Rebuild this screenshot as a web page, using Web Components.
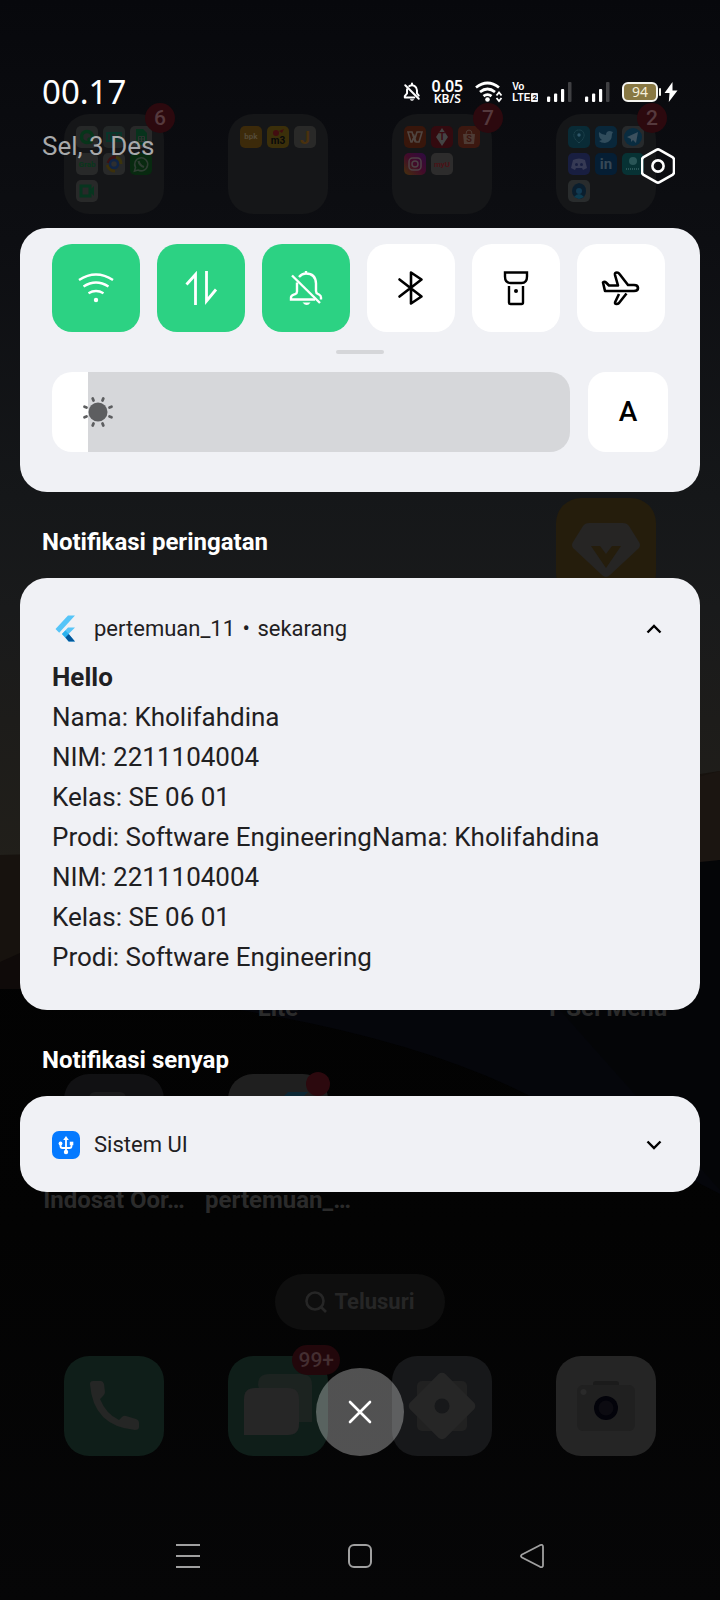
<!DOCTYPE html>
<html lang="id">
<head>
<meta charset="utf-8">
<meta name="viewport" content="width=device-width, initial-scale=1">
<title>Panel notifikasi</title>
<style>
  html, body { margin: 0; background: #050506; }
  body { font-family: Roboto, "Noto Sans", sans-serif; color: #fff; }
</style>
</head>
<body>
<phone-screen>
  <home-screen slot="home"></home-screen>
  <notification-shade slot="shade">
    <status-header></status-header>
    <quick-panel></quick-panel>
    <notice-section heading="Notifikasi peringatan">
      <notice-card app="pertemuan_11" time="sekarang" icon="flutter" open>
        <strong>Hello</strong>
        <span>Nama: Kholifahdina</span>
        <span>NIM: 2211104004</span>
        <span>Kelas: SE 06 01</span>
        <span>Prodi: Software EngineeringNama: Kholifahdina</span>
        <span>NIM: 2211104004</span>
        <span>Kelas: SE 06 01</span>
        <span>Prodi: Software Engineering</span>
      </notice-card>
    </notice-section>
    <notice-section heading="Notifikasi senyap">
      <notice-card app="Sistem UI" icon="usb"></notice-card>
    </notice-section>
    <clear-button></clear-button>
    <nav-bar></nav-bar>
  </notification-shade>
</phone-screen>

<script>
const define = (name, render, after) => customElements.define(name, class extends HTMLElement {
  connectedCallback() {
    if (this.shadowRoot) return;
    const root = this.attachShadow({ mode: 'open' });
    const t = document.createElement('template');
    t.innerHTML = '<style>*{box-sizing:border-box} button{font:inherit;color:inherit;border:0;padding:0;background:none;cursor:pointer} svg{display:block}</style>' + render(this);
    root.append(t.content.cloneNode(true));
    if (after) after(root, this);
  }
});

/* Icon drawings: [width, height, viewBox, markup] */
const ICONS = {
  belloff: [18, 22, '0 0 20 22', '<g fill="none" stroke="currentColor" stroke-width="2.200" stroke-linejoin="round" stroke-linecap="round"><path d="M2.500 3.500 17.500 18.500"/><path d="M4.500 8v4.500L2 15.500v1.500h10.500M7 4.500Q10 2.700 13 4.500q2.500 1.600 2.500 4.500v3.500l2 2.500M10 1.500v1.500"/></g><path d="M7.500 19h5q-2.500 3.500-5 0z" fill="currentColor"/>'],
  wifistat: [28, 22, '0 0 28 22', '<g fill="none" stroke="currentColor" stroke-width="2.800"><path d="M1 6.500Q12.500-2.500 24 6.500M5 11Q12.500 5 20 11M8.500 15.200Q12.500 12 16.500 15.200"/></g><circle cx="12.500" cy="18.500" r="2.300" fill="currentColor"/><path d="M21.500 14.500 24 11.500l2.500 3M21.500 17l2.500 3 2.500-3" fill="none" stroke="currentColor" stroke-width="1.800"/>'],
  signal: [28, 20, '0 0 28 20', '<g fill="currentColor"><rect x="1" y="14.500" width="3.200" height="5.500" rx="1"/><rect x="8" y="11.500" width="3.200" height="8.500" rx="1"/><rect x="15" y="7" width="3.200" height="13" rx="1"/><rect x="22" width="3.500" height="20" rx="1" opacity=".22"/></g>'],
  bolt: [14, 20, '0 0 14 20', '<path d="M8.500 0 .500 11h5L4.800 20 13.500 8.500h-5z" fill="currentColor"/>'],
  hex: [34, 36, '1 0 34 36', '<g fill="none" stroke="currentColor"><path stroke-width="2.600" stroke-linejoin="round" d="M16.400 1.800q1.600-.900 3.200 0l12.800 7.300q1.600 1 1.600 2.900v12q0 1.900-1.600 2.900l-12.800 7.300q-1.600.900-3.200 0L3.600 26.900Q2 25.900 2 24V12q0-1.900 1.600-2.900z"/><circle cx="18" cy="18" r="5.600" stroke-width="2.600"/></g>'],
  wifi: [40, 40, '0 0 40 40', '<g fill="none" stroke="currentColor" stroke-width="2.400"><path d="M3 12Q20 1 37 12M7.500 18.500Q20 10.500 32.500 18.500M12.500 25.200Q20 20.800 27.500 25.200"/></g><circle cx="20" cy="32" r="2.200" fill="currentColor"/>'],
  data: [40, 40, '0 0 40 40', '<path d="M5.500 16.500 14.500 6.500V37M25.500 3v30L35 21.500" fill="none" stroke="currentColor" stroke-width="2.800"/>'],
  bell: [40, 40, '0 0 40 40', '<g fill="none" stroke="currentColor" stroke-width="2.400"><path d="M6 7.500 34 35"/><path d="M11 14.500v9q0 2-1.800 2.600l-1.500.500q-2.700 1-2.700 3V31.500h24M13 9Q16 5.500 20 5.500q9.500 0 10 10v7.500q0 2.200 2 3l1 .500q2 1 2 3v2M20 3v3"/></g><path d="M16.500 34.500h8q-3.500 5-8 0z" fill="currentColor"/>'],
  bluetooth: [40, 40, '0 0 40 40', '<path d="M8.500 11.500 30.500 28.500 20 35.500V4.500L30.500 11.500 8.500 28.500" fill="none" stroke="currentColor" stroke-width="2.600" stroke-linejoin="round" stroke-linecap="round"/>'],
  torch: [40, 40, '0 0 40 40', '<g fill="none" stroke="currentColor" stroke-width="2.400"><path d="M9 4.500h22v4q0 6.500-5.500 6.500h-11Q9 15 9 8.500z"/><path d="M13 18v16.500q0 1.500 1.500 1.500h11q1.500 0 1.500-1.500V18"/></g><circle cx="20" cy="23" r="2" fill="currentColor"/>'],
  plane: [40, 40, '0 0 40 40', '<g fill="none" stroke="currentColor" stroke-width="2.600" stroke-linejoin="round"><path d="M4 23 2 14.500q1.500-1.500 3 0L8 17.500h9L14 7q-.500-2.500 2-2.500 1.500 0 2.500 1.500L27 17h6q4 0 4 3t-4 3z"/><path d="m18 26-3.800 8q-.700 2 1.300 2 1.500 0 2.500-1l7.500-9.500"/></g>'],
  sun: [32, 32, '0 0 32 32', '<circle cx="16" cy="16" r="9.500" fill="currentColor"/><path d="m10.700 2.500.800 2M21.300 2.500l-.800 2M29.500 10.700l-2 .800M29.500 21.300l-2-.800M21.300 29.500l-.800-2M10.700 29.500l.800-2M2.500 21.300l2-.800M2.500 10.700l2 .800" stroke="currentColor" stroke-width="2.800" stroke-linecap="round"/>'],
  flutter: [28, 28, '1 0 28 28', '<path d="M17 .500h7L8.200 17.800 4.500 14zM24 12.500h-7L11 19l6.500 7.500H24L17.500 19z" fill="#56c5f8"/><path d="m11 19 3.400-3.500 3.400 3.500-3.400 3.600z" fill="#29b1ee"/><path d="m14.400 22.600 3.300 3.900H24L17.800 19z" fill="#01579b"/>'],
  usb: [28, 28, '0 0 28 28', '<rect width="28" height="28" rx="7" fill="#057aff"/><path d="M14 7v14M8.500 12v3q0 2 2 2h7q2 0 2-2v-3" fill="none" stroke="#fff" stroke-width="1.800"/><path d="M14 5l2.800 4h-5.600z" fill="#fff"/><circle cx="14" cy="21" r="2.200" fill="#fff"/><circle cx="8.500" cy="12.500" r="1.900" fill="#fff"/><rect x="17.800" y="10.700" width="3.500" height="3.500" fill="#fff"/>'],
  up: [16, 16, '0 0 16 16', '<path d="m1.500 11.500 6.500-6.500 6.500 6.500" fill="none" stroke="currentColor" stroke-width="2.400"/>'],
  down: [16, 16, '0 0 16 16', '<path d="m1.500 4.500 6.500 6.500 6.500-6.500" fill="none" stroke="currentColor" stroke-width="2.400"/>'],
  close: [24, 24, '0 0 24 24', '<path d="m2 2 20 20M22 2 2 22" stroke="currentColor" stroke-width="2.600" stroke-linecap="round"/>'],
  menu: [24, 24, '0 0 24 24', '<path d="M0 1h24M0 12h24M0 23h24" stroke="currentColor" stroke-width="2"/>'],
  home: [24, 24, '0 0 24 24', '<rect x="1" y="1" width="22" height="22" rx="5" fill="none" stroke="currentColor" stroke-width="2"/>'],
  back: [24, 24, '0 0 24 24', '<path d="M1.600 10.800 20 1.200q3-1.200 3 1.500v18.600q0 2.700-3 1.500L1.600 13.200q-1.200-1.200 0-2.400z" fill="none" stroke="currentColor" stroke-width="1.800"/>'],
  search: [22, 22, '0 0 22 22', '<g fill="none" stroke="currentColor" stroke-width="2.600"><circle cx="10" cy="10" r="8.500"/><path d="m16 16 5 5"/></g>'],
};
define('ui-icon', el => {
  const [w, h, vb, art] = ICONS[el.getAttribute('name')];
  return `<style>:host{display:block;flex:none}</style><svg aria-hidden="true" width="${w}" height="${h}" viewBox="${vb}">${art}</svg>`;
});

define('phone-screen', () => `
<style>
  :host{display:grid;min-height:100vh;background:linear-gradient(#07080c 0,#0a0b0f 7%,#0d0e12 15%,#151719 31%,#191a1b 38%,#1d1c1a 45%,#211f1a 54%,#211f1a 60%,#020202 60%,#030303 78%,#060607);position:relative;isolation:isolate}
  .land{position:absolute;inset:0;width:100%;height:100%;z-index:-1}
  ::slotted(*){grid-area:1/1;min-width:0}
</style>
<svg class="land" viewBox="0 0 720 1600" preserveAspectRatio="none" aria-hidden="true">
  <defs><linearGradient id="floor" x1="0" y1="0" x2="0" y2="1"><stop stop-color="#020202"/><stop offset=".5" stop-color="#030303"/><stop offset="1" stop-color="#060607"/></linearGradient></defs>
  <path d="M0 855 200 850 720 771V1010H0z" fill="#17120e"/>
  <path d="M720 771 500 830V960H720z" fill="#1b1511"/>
  <path d="M0 962 60 935V1010H0z" fill="#0f0a09"/>
  <path d="M0 989H250L720 860V1600H0z" fill="url(#floor)"/>
  <path d="M240 1010Q420 1040 530 1096L720 1194V1010z" fill="#05060b"/>
  <path d="M700 862 720 860V1190L560 1010z" fill="#040507"/>
</svg>
<slot name="home"></slot><slot name="shade"></slot>`);

/* ---- Home screen under the shade ---- */
const word = (s, size, fill, y = 15) => `<text x="11" y="${y}" text-anchor="middle" font-family="Roboto, sans-serif" font-weight="700" font-size="${size}" fill="${fill}">${s}</text>`;
const FOLDERS = [
  { badge: 6, apps: [
    ['#262828', '<circle cx="11" cy="11" r="5.500" fill="none" stroke="#07351a" stroke-width="3.500"/><path d="m12 12 4 5" stroke="#07351a" stroke-width="3"/>'],
    ['#222626', '<path d="M4 7h14v8H4zM8 7v8M14 7v8" fill="none" stroke="#08352a" stroke-width="2"/>'],
    ['#282929', '<path d="M6 3h7l4 4v12H6z" fill="#07331c"/><path d="M8.500 10.500h6v5h-6zM11.500 10v6M8 13h7" stroke="#303231" fill="none"/>'],
    ['#282929', word('Grab', 8, '#07371b', 14)],
    ['#282929', '<path d="M5 10Q7 4 13 4" stroke="#3c1213" stroke-width="3" fill="none"/><path d="M13 4q5 2 5 7" stroke="#3c340b" stroke-width="3" fill="none"/><path d="M4 12q3 6 8 6" stroke="#3c300a" stroke-width="3" fill="none"/><circle cx="11" cy="11" r="4" fill="#2e2f30" stroke="#102445" stroke-width="2.500"/>'],
    ['#082a10', '<path d="m4.500 18 1-3.500a6.500 6.500 0 1 1 2.500 2.500z" fill="none" stroke="#2f3d33" stroke-width="1.600"/><path d="M8.500 8q1 4.500 5.500 6" stroke="#2f3d33" stroke-width="2.200" fill="none"/>'],
    ['#282929', '<path d="M5 6h9v10H5z" fill="none" stroke="#07351f" stroke-width="3"/><path d="m14 10 4-4v10l-4-4z" fill="#07351f"/>'],
  ]},
  { apps: [
    ['#3c2a0a', word('bpk', 8, '#544a38', 13)],
    ['#3b2f0a', word('m3', 10, '#08090a', 18) + '<circle cx="9" cy="7" r="3" fill="#420d10"/><path d="m12 5 5-2-2 4z" fill="#420d10"/>'],
    ['#292928', word('J', 18, '#49310e', 18)],
  ]},
  { badge: 7, apps: [
    ['#38160b', '<path d="M4 6h4l2.500 8L13 6h5l-3 10h-3l-2-6-2 6H7z" fill="none" stroke="#504540" stroke-width="1.600"/>'],
    ['#330a0f', '<path d="M11 2 17 11 11 20 5 11z" fill="#444"/>' + word('T', 10, '#3a0a10', 14)],
    ['#3c1810', '<path d="M5 8h12l-1 10H6z" fill="#4e3b34"/><path d="M8 8q0-4 3-4t3 4" fill="none" stroke="#4e3b34"/>' + word('S', 9, '#3b1610', 16)],
    ['url(#ig)', '<g fill="none" stroke="#4d4145" stroke-width="1.500"><rect x="5" y="5" width="12" height="12" rx="3.500"/><circle cx="11" cy="11" r="3"/></g>'],
    ['#2d2c2c', word('myU', 8, '#4b1216', 14)],
  ]},
  { badge: 2, apps: [
    ['#092b36', '<path d="M11 17Q5 12 6 8t5-4 5 4-5 9z" fill="none" stroke="#2a505a" stroke-dasharray="1 1"/><circle cx="11" cy="9" r="1.700" fill="#31586a"/>'],
    ['#09273a', '<path d="M4 6q3 3 7 3 0-4 4-4l3 1-1 2q0 8-7 9-4 0-6-2l3-1q-4-3-3-8z" fill="#304c5c"/>'],
    ['#272a2c', '<circle cx="11" cy="11" r="9" fill="#092c40"/><path d="m5 11 11-5-2 11-3-3-2 2v-3z" fill="#3c505e"/>'],
    ['#181e40', '<path d="M5 7q6-3 12 0l2 8-4 2-1-2H8l-1 2-4-2z" fill="#363a54"/><circle cx="8.500" cy="11.500" r="1.500" fill="#181e40"/><circle cx="13.500" cy="11.500" r="1.500" fill="#181e40"/>'],
    ['#051e34', word('in', 15, '#364856', 16)],
    ['#073234', '<circle cx="11" cy="8" r="4" fill="#295557"/><path d="M4 16h14" stroke="#295557" stroke-width="2" stroke-dasharray="1 1"/>'],
    ['#292c2d', '<path d="M11 3q7 1 7 8t-7 8q-7-2-7-8t7-8z" fill="#0a1e2e"/><circle cx="11" cy="11" r="3" fill="#123a52"/><path d="M6 17q5-6 10 0l-5 2z" fill="#0d3c50"/>'],
  ]},
];
define('count-badge', () => `
<style>:host{display:grid;place-items:center;position:absolute;top:-11px;right:-11px;min-width:30px;height:30px;padding:0 6px;border-radius:15px;background:#2c090e;color:#55393d;font:500 21px/30px Roboto,sans-serif;z-index:1}
:host([dot]){top:-2px;right:-2px;min-width:24px;height:24px}
:host([dock]){right:-12px;color:#442e31;background:#22070b}</style><slot></slot>`);

define('app-folder', el => {
  const f = FOLDERS[+el.getAttribute('index')];
  return `<style>
  :host{display:grid;position:relative;width:100px;height:100px;padding:12px;border-radius:25px;background:#151618;grid-template-columns:repeat(3,22px);grid-auto-rows:22px;gap:5px}
  </style>
  ${f.apps.map(([bg, art]) => `<svg width="22" height="22" viewBox="0 0 22 22" aria-hidden="true">${bg[0] === 'u' ? '<defs><linearGradient id="ig" x1="1" y1="0" x2="0" y2="1"><stop stop-color="#2e0b41"/><stop offset=".5" stop-color="#420b29"/><stop offset="1" stop-color="#45310c"/></linearGradient></defs>' : ''}<rect width="22" height="22" rx="5" fill="${bg}"/>${art}</svg>`).join('')}
  ${f.badge ? `<count-badge>${f.badge}</count-badge>` : ''}`;
});

const APPS = {
  gem: ['#251d0c', '<path d="M33 25h34q4 0 6 3l10 16q2 3 0 6L54 77q-4 4-8 0L17 50q-2-3 0-6l10-16q2-3 6-3z" fill="#262524"/><path d="M35 48h9l6 8 6-8h9L50 70z" fill="#251d0c"/>'],
  simtool: ['#111113', '<rect x="25" y="18" width="37" height="60" rx="6" fill="#1b1b1c"/>'],
  flutterapp: ['#1f1f1f', '<path d="M60 18h20L40 58 30 48z" fill="#0c2734"/>'],
  phone: ['#0f1e19', '<path d="M26 28q0-3 3-3h8q2 0 3 3l1 8q0 2-2 4l-3 3q6 15 19 21l3-3q2-2 4-1l10 3q3 1 3 4v4q0 3-4 3Q29 70 26 28z" fill="#252625"/>'],
  message: ['#0f1e19', '<path d="M30 29q0-11 11-11h32q11 0 11 11v37H40z" fill="#1c2320"/><path d="M16 79V43q0-11 11-11h33q11 0 11 11v25q0 11-11 11z" fill="#262626"/>'],
  settings: ['#17181a', '<rect x="25" y="25" width="50" height="50" rx="5" fill="#212121"/><rect x="25" y="25" width="50" height="50" rx="5" fill="#262626" transform="rotate(45 50 50)"/><circle cx="50" cy="50" r="7.500" fill="#17181a"/>'],
  camera: ['#252525', '<rect x="37" y="25" width="26" height="8" rx="3" fill="#1b1b1b"/><rect x="21" y="29" width="58" height="46" rx="6" fill="#202020"/><circle cx="27.500" cy="36" r="3" fill="#2a2a2a"/><circle cx="50" cy="52" r="12" fill="#03030a"/><circle cx="50" cy="52" r="7.500" fill="#0c0b11"/>'],
};
define('app-icon', el => {
  const [bg, art] = APPS[el.getAttribute('name')];
  return `<style>:host{display:block;position:relative;width:100px;height:100px;border-radius:25px;background:${bg}}</style>
  <svg width="100" height="100" viewBox="0 0 100 100" aria-hidden="true">${art}</svg><slot></slot>`;
});

define('home-screen', () => `
<style>
  :host{display:flex;flex-direction:column;align-items:center;padding:114px 32px 0;color:#2b2b2b}
  .grid,.dock{display:grid;grid-template-columns:repeat(4,1fr);justify-items:center;width:100%}
  .grid{grid-template-rows:repeat(6,192px)}
  .cell{display:flex;flex-direction:column;align-items:center;gap:12px;font:700 24px/28px Roboto,sans-serif;white-space:nowrap}
  .low{grid-row:5;padding-top:112px}
  .search{display:flex;align-items:center;gap:7px;height:56px;padding:0 30px;border-radius:28px;background:#0e0e0e;color:#262626;font:700 22px/28px Roboto,sans-serif;margin:8px 0 26px}
</style>
<div class="grid">
  <app-folder index="0"></app-folder><app-folder index="1"></app-folder><app-folder index="2"></app-folder><app-folder index="3"></app-folder>
  <div class="cell" style="grid-area:3/4"><app-icon name="gem"></app-icon></div>
  <div class="cell low" style="grid-column:2">Lite</div>
  <div class="cell low" style="grid-column:4">T-Sel Menu</div>
  <div class="cell" style="grid-area:6/1"><app-icon name="simtool"></app-icon>Indosat Oor…</div>
  <div class="cell" style="grid-area:6/2"><app-icon name="flutterapp"><count-badge dot></count-badge></app-icon>pertemuan_…</div>
</div>
<button class="search" type="button"><ui-icon name="search"></ui-icon>Telusuri</button>
<div class="dock">
  <app-icon name="phone"></app-icon><app-icon name="message"><count-badge dock>99+</count-badge></app-icon>
  <app-icon name="settings"></app-icon><app-icon name="camera"></app-icon>
</div>`);

/* ---- Shade ---- */
define('notification-shade', () => `
<style>:host{display:flex;flex-direction:column;position:relative;z-index:2;padding:68px 20px 0;min-height:100vh;box-sizing:border-box}</style><slot></slot>`);

define('status-header', () => `
<style>
  :host{display:block;padding:0 22px 44px}
  .row{display:flex;align-items:center}
  .clock{font:400 33px/48px "Noto Sans",sans-serif;margin-right:auto}
  .rate{display:flex;flex-direction:column;align-items:center;margin:0 12px 0 10px;font:600 12px/12px "Noto Sans",sans-serif}
  .rate b{font-weight:600;font-size:16px;line-height:13px}
  .volte{display:flex;flex-direction:column;font:700 10px/11px "Liberation Sans",sans-serif;margin:0 8px 0 9px}
  .volte div{display:flex;align-items:center;gap:1px}
  .volte i{font:700 8px/9px Roboto,sans-serif;color:#0a0b0f;background:#f2f3f5;border-radius:1px;padding:0 1px}
  .sigs{display:flex;gap:10px;margin-right:10px}
  .bat{width:36px;height:20px;border:2px solid #f5f5f0;border-radius:6px;background:#887843;color:#f4eeda;text-align:center;font:400 14px/16px "Noto Sans",sans-serif}
  .nub{width:2px;height:8px;margin:0 3px 0 1px;background:#f5f5f0;border-radius:1px}
  .second{justify-content:space-between;align-items:flex-start;margin-top:14px}
  .date{font-size:26px;line-height:32px;color:#a8a9ab}
  .second button{margin:18px 3px 0 0}
</style>
<div class="row">
  <time class="clock">00.17</time>
  <ui-icon name="belloff"></ui-icon>
  <span class="rate"><b>0.05</b><span>KB/S</span></span>
  <ui-icon name="wifistat"></ui-icon>
  <span class="volte"><span>Vo</span><div><span>LTE</span><i>2</i></div></span>
  <span class="sigs"><ui-icon name="signal"></ui-icon><ui-icon name="signal"></ui-icon></span>
  <span class="bat">94</span><span class="nub"></span><ui-icon name="bolt"></ui-icon>
</div>
<div class="row second"><span class="date">Sel, 3 Des</span><button type="button" aria-label="Setelan"><ui-icon name="hex"></ui-icon></button></div>`);

define('quick-tile', el => `
<style>
  :host{display:block;aspect-ratio:1}
  button{display:grid;place-items:center;width:100%;height:100%;border-radius:20px;background:#fff;color:#000}
  :host([on]) button{background:#2cd283;color:#fff}
</style>
<button type="button" aria-label="${el.getAttribute('label')}" aria-pressed="${el.hasAttribute('on')}"><ui-icon name="${el.getAttribute('icon')}"></ui-icon></button>`);

define('quick-panel', () => `
<style>
  :host{display:block;padding:16px 32px 40px;border-radius:27px;background:#f0f1f5;color:#000}
  .tiles{display:grid;grid-template-columns:repeat(6,1fr);gap:17px;margin-right:3px}
  .handle{width:48px;height:4px;border-radius:2px;background:#d5d6d9;margin:18px auto}
  .bright{display:grid;grid-template-columns:1fr 80px;gap:18px;height:80px}
  .track{position:relative}
  input{appearance:none;-webkit-appearance:none;display:block;width:100%;height:100%;margin:0;border-radius:20px;background:linear-gradient(90deg,#fff 7%,#d6d7da 7%)}
  input::-webkit-slider-thumb{-webkit-appearance:none;width:40px;height:80px;background:none}
  .track ui-icon{position:absolute;left:30px;top:24px;color:#5d5e60;pointer-events:none}
  .auto{border-radius:18px;background:#fff;font:500 28px/32px Roboto,sans-serif}
</style>
<div class="tiles">
  <quick-tile icon="wifi" label="Wi-Fi" on></quick-tile><quick-tile icon="data" label="Data seluler" on></quick-tile>
  <quick-tile icon="bell" label="Senyap" on></quick-tile><quick-tile icon="bluetooth" label="Bluetooth"></quick-tile>
  <quick-tile icon="torch" label="Senter"></quick-tile><quick-tile icon="plane" label="Mode pesawat"></quick-tile>
</div>
<div class="handle"></div>
<div class="bright"><div class="track"><input type="range" min="0" max="100" value="7" aria-label="Kecerahan"><ui-icon name="sun"></ui-icon></div><button class="auto" type="button">A</button></div>`,
root => {
  const r = root.querySelector('input');
  r.addEventListener('input', () => r.style.background = `linear-gradient(90deg,#fff ${r.value}%,#d6d7da ${r.value}%)`);
});

define('notice-section', el => `
<style>:host{display:block} h2{margin:0;padding:34px 22px 20px;font:700 24px/32px Roboto,sans-serif}</style>
<h2>${el.getAttribute('heading')}</h2><slot></slot>`);

define('notice-card', el => {
  const open = el.hasAttribute('open'), time = el.getAttribute('time');
  return `<style>
  :host{display:block;padding:31px 32px 29px;border-radius:27px;background:#f0f1f5;color:#1f2022}
  :host([open]){padding:33px 32px}
  header{display:flex;align-items:center;height:36px;font-size:22px;line-height:36px}
  header>ui-icon{margin-right:14px}
  i{font-style:normal;margin:0 2px}
  button{margin:0 6px 0 auto;color:#000}
  .body{display:flex;flex-direction:column;margin-top:10px;font-size:26px;line-height:40px}
  </style>
  <header><ui-icon name="${el.getAttribute('icon')}"></ui-icon><span>${el.getAttribute('app')}${time ? ' <i>•</i> ' + time : ''}</span>
  <button type="button" aria-label="${open ? 'Ciutkan' : 'Luaskan'}"><ui-icon name="${open ? 'up' : 'down'}"></ui-icon></button></header>
  ${open ? '<div class="body"><slot></slot></div>' : ''}`;
});

define('clear-button', () => `
<style>:host{display:flex;justify-content:center;margin-top:auto;padding:24px 0 56px} button{display:grid;place-items:center;width:88px;height:88px;border-radius:50%;background:rgba(255,255,255,.31);color:#fff}</style>
<button type="button" aria-label="Hapus semua"><ui-icon name="close"></ui-icon></button>`);

define('nav-bar', () => `
<style>:host{display:flex;align-items:center;justify-content:center;gap:148px;height:88px;color:#a0a0a0}</style>
<button type="button" aria-label="Terbaru"><ui-icon name="menu"></ui-icon></button>
<button type="button" aria-label="Beranda"><ui-icon name="home"></ui-icon></button>
<button type="button" aria-label="Kembali"><ui-icon name="back"></ui-icon></button>`);
</script>
</body>
</html>
